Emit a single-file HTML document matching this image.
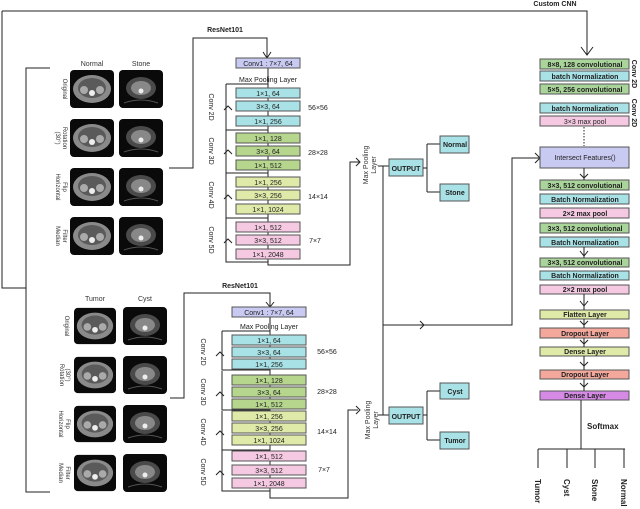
<!DOCTYPE html>
<html><head><meta charset="utf-8"><style>
html,body{margin:0;padding:0;background:#fff;}
svg{display:block;font-family:"Liberation Sans",sans-serif;}
.b{stroke:#555;stroke-width:1;}
.t{font-size:7px;fill:#222;text-anchor:middle;font-weight:bold;}
.s{font-size:7px;fill:#333;text-anchor:middle;}
.l{stroke:#222;stroke-width:1;fill:none;}
.cy{fill:#a8e2e6}.gr{fill:#b6d68e}.yg{fill:#dfeaa8}.pk{fill:#f5c9e2}.lv{fill:#c9caf2}.rd{fill:#f4a89c}.pu{fill:#d68ae6}.gd{fill:#a9d49a}
</style></head><body>
<svg width="640" height="509" viewBox="0 0 640 509">
<defs>
<symbol id="ct" viewBox="0 0 44 38"><rect width="44" height="38" rx="4" fill="#0a0a0a"/><ellipse cx="22" cy="19" rx="19" ry="14" fill="#8a8a8a"/><ellipse cx="22" cy="18" rx="14" ry="10" fill="#5a5a5a"/><ellipse cx="22" cy="23" rx="3" ry="3" fill="#eee"/><ellipse cx="14" cy="20" rx="4" ry="4" fill="#aaa"/><ellipse cx="30" cy="20" rx="4" ry="4" fill="#aaa"/></symbol>
<symbol id="ct2" viewBox="0 0 44 38"><rect width="44" height="38" rx="4" fill="#0a0a0a"/><ellipse cx="22" cy="18" rx="15" ry="11" fill="#4a4a4a"/><ellipse cx="22" cy="18" rx="10" ry="7" fill="#888"/><ellipse cx="22" cy="21" rx="2.5" ry="2.5" fill="#eee"/><path d="M5 33 Q22 27 39 33" stroke="#555" fill="none"/></symbol>
</defs>

<path class="l" d="M2 11 H587 V55"/>
<path class="l" d="M581 47 L587 55 L593 47"/>
<path class="l" d="M2 11 V288 H26"/>
<path class="l" d="M50 68 H26 V492 H50"/>
<text class="t" x="555" y="6">Custom CNN</text>

<text class="s" x="92" y="66">Normal</text><text class="s" x="141" y="66">Stone</text>
<use href="#ct" x="70" y="70" width="44" height="38"/><use href="#ct2" x="119" y="70" width="44" height="38"/>
<use href="#ct" x="70" y="119" width="44" height="38"/><use href="#ct2" x="119" y="119" width="44" height="38"/>
<use href="#ct" x="70" y="168" width="44" height="38"/><use href="#ct2" x="119" y="168" width="44" height="38"/>
<use href="#ct" x="70" y="217" width="44" height="38"/><use href="#ct2" x="119" y="217" width="44" height="38"/>
<g class="s" style="font-size:6px">
<text transform="translate(63,89) rotate(90)">Original</text>
<text transform="translate(63,138) rotate(90)">Rotation</text><text transform="translate(56,138) rotate(90)">(30°)</text>
<text transform="translate(56,187) rotate(90)">Horizontal</text><text transform="translate(63,187) rotate(90)">Flip</text>
<text transform="translate(56,236) rotate(90)">Median</text><text transform="translate(63,236) rotate(90)">Filter</text>
</g>

<text class="s" x="95" y="301">Tumor</text><text class="s" x="145" y="301">Cyst</text>
<use href="#ct" x="74" y="307" width="42" height="38"/><use href="#ct2" x="123" y="307" width="44" height="38"/>
<use href="#ct" x="74" y="356" width="42" height="38"/><use href="#ct2" x="123" y="356" width="44" height="38"/>
<use href="#ct" x="74" y="405" width="42" height="38"/><use href="#ct2" x="123" y="405" width="44" height="38"/>
<use href="#ct" x="74" y="454" width="42" height="38"/><use href="#ct2" x="123" y="454" width="44" height="38"/>
<g class="s" style="font-size:6px">
<text transform="translate(65,326) rotate(90)">Original</text>
<text transform="translate(60,375) rotate(90)">Rotation</text><text transform="translate(66,375) rotate(90)">(30°)</text>
<text transform="translate(59,424) rotate(90)">Horizontal</text><text transform="translate(66,424) rotate(90)">Flip</text>
<text transform="translate(59,473) rotate(90)">Median</text><text transform="translate(66,473) rotate(90)">Filter</text>
</g>

<text class="t" x="225" y="32">ResNet101</text>
<path class="l" d="M169 168 H193 V38 H267 V57"/><path class="l" d="M263 52 L267 58 L271 52"/>
<path class="l" d="M268 68 V258 M268 258 V265 H350 V162 H360"/>
<path class="l" d="M226 84 V130 H268 M226 128 V173 H268 M226 173 V218 H268 M226 218 V262 H268"/>
<path class="l" d="M226 84 H268"/>
<g class="b">
<rect class="lv" x="236" y="58" width="64" height="10"/>
<rect class="cy" x="236" y="88" width="64" height="10"/><rect class="cy" x="236" y="101" width="64" height="10"/><rect class="cy" x="236" y="116" width="64" height="10"/>
<rect class="gr" x="236" y="133" width="64" height="10"/><rect class="gr" x="236" y="146" width="64" height="10"/><rect class="gr" x="236" y="160" width="64" height="10"/>
<rect class="yg" x="236" y="177" width="64" height="10"/><rect class="yg" x="236" y="190" width="64" height="10"/><rect class="yg" x="236" y="204" width="64" height="10"/>
<rect class="pk" x="236" y="222" width="64" height="10"/><rect class="pk" x="236" y="235" width="64" height="10"/><rect class="pk" x="236" y="249" width="64" height="10"/>
</g>
<g class="t" style="font-weight:normal">
<text x="268" y="66">Conv1 : 7×7, 64</text>
<text x="268" y="82">Max Pooling Layer</text>
<text x="268" y="96">1×1, 64</text><text x="268" y="109">3×3, 64</text><text x="268" y="124">1×1, 256</text>
<text x="268" y="141">1×1, 128</text><text x="268" y="154">3×3, 64</text><text x="268" y="168">1×1, 512</text>
<text x="268" y="185">1×1, 256</text><text x="268" y="198">3×3, 256</text><text x="268" y="212">1×1, 1024</text>
<text x="268" y="230">1×1, 512</text><text x="268" y="243">3×3, 512</text><text x="268" y="257">1×1, 2048</text>
<text x="318" y="110">56×56</text><text x="318" y="155">28×28</text><text x="318" y="199">14×14</text><text x="315" y="243">7×7</text>
<text transform="translate(209,107) rotate(90)">Conv 2D</text>
<text transform="translate(209,151) rotate(90)">Conv 3D</text>
<text transform="translate(209,195) rotate(90)">Conv 4D</text>
<text transform="translate(209,240) rotate(90)">Conv 5D</text>
</g>
<g class="l"><path d="M224 110 L228 106 L232 110"/><path d="M224 154 L228 150 L232 154"/><path d="M224 199 L228 195 L232 199"/><path d="M224 243 L228 239 L232 243"/></g>
<g class="s" style="font-size:7px"><text transform="translate(368,165) rotate(-90)">Max Pooling</text><text transform="translate(376,165) rotate(-90)">Layer</text></g>
<path class="l" d="M356 158 L360 162 L356 166"/>
<path class="l" d="M378 166 H389 M383 166 V415"/>
<rect class="cy b" x="389" y="159" width="34" height="17"/><text class="t" x="406" y="171">OUTPUT</text>
<path class="l" d="M423 168 H427 M427 144 V192 M427 144 H440 M427 192 H440"/>
<rect class="cy b" x="440" y="136" width="29" height="17"/><text class="t" x="455" y="147">Normal</text>
<rect class="cy b" x="440" y="184" width="29" height="17"/><text class="t" x="455" y="195">Stone</text>

<text class="t" x="240" y="288">ResNet101</text>
<path class="l" d="M170 398 H184 V293 H270 V306"/><path class="l" d="M266 302 L270 307 L274 302"/>
<path class="l" d="M270 316 V487 M270 487 V498 H348 V410 H358"/>
<path class="l" d="M222 331 V370 H270 M222 371 V410 H270 M222 411 V450 H270 M222 450 V491 H270 M222 331 H270"/>
<g class="b">
<rect class="lv" x="232" y="307" width="74" height="10"/>
<rect class="cy" x="232" y="335" width="74" height="10"/><rect class="cy" x="232" y="347" width="74" height="10"/><rect class="cy" x="232" y="359" width="74" height="10"/>
<rect class="gr" x="232" y="375" width="74" height="10"/><rect class="gr" x="232" y="387" width="74" height="10"/><rect class="gr" x="232" y="399" width="74" height="10"/>
<rect class="yg" x="232" y="411" width="74" height="10"/><rect class="yg" x="232" y="423" width="74" height="10"/><rect class="yg" x="232" y="435" width="74" height="10"/>
<rect class="pk" x="232" y="451" width="74" height="10"/><rect class="pk" x="232" y="465" width="74" height="10"/><rect class="pk" x="232" y="478" width="74" height="10"/>
</g>
<g class="t" style="font-weight:normal">
<text x="269" y="315">Conv1 : 7×7, 64</text>
<text x="269" y="329">Max Pooling Layer</text>
<text x="269" y="343">1×1, 64</text><text x="269" y="355">3×3, 64</text><text x="269" y="367">1×1, 256</text>
<text x="269" y="383">1×1, 128</text><text x="269" y="395">3×3, 64</text><text x="269" y="407">1×1, 512</text>
<text x="269" y="419">1×1, 256</text><text x="269" y="431">3×3, 256</text><text x="269" y="443">1×1, 1024</text>
<text x="269" y="459">1×1, 512</text><text x="269" y="473">3×3, 512</text><text x="269" y="486">1×1, 2048</text>
<text x="327" y="354">56×56</text><text x="327" y="394">28×28</text><text x="327" y="434">14×14</text><text x="324" y="472">7×7</text>
<text transform="translate(201,352) rotate(90)">Conv 2D</text>
<text transform="translate(201,392) rotate(90)">Conv 3D</text>
<text transform="translate(201,432) rotate(90)">Conv 4D</text>
<text transform="translate(201,472) rotate(90)">Conv 5D</text>
</g>
<g class="l"><path d="M216 356 L220 352 L224 356"/><path d="M216 396 L220 392 L224 396"/><path d="M216 435 L220 431 L224 435"/><path d="M216 475 L220 471 L224 475"/></g>
<g class="s" style="font-size:7px"><text transform="translate(370,420) rotate(-90)">Max Pooling</text><text transform="translate(378,420) rotate(-90)">Layer</text></g>
<path class="l" d="M356 406 L360 410 L356 414"/>
<path class="l" d="M378 415 H389"/>
<rect class="cy b" x="389" y="407" width="34" height="17"/><text class="t" x="406" y="419">OUTPUT</text>
<path class="l" d="M423 415 H427 M427 391 V440 M427 391 H440 M427 440 H440"/>
<rect class="cy b" x="440" y="383" width="29" height="16"/><text class="t" x="455" y="394">Cyst</text>
<rect class="cy b" x="440" y="432" width="29" height="17"/><text class="t" x="455" y="443">Tumor</text>

<path class="l" d="M383 325 H512 V158 H540"/><path class="l" d="M420 321 L424 325 L420 329"/><path class="l" d="M535 153 L540 158 L535 163"/>

<g class="b">
<rect class="gd" x="540" y="59" width="89" height="10"/>
<rect class="cy" x="540" y="71" width="89" height="10"/>
<rect class="gd" x="540" y="84" width="89" height="10"/>
<rect class="cy" x="540" y="103" width="89" height="10"/>
<rect class="pk" x="540" y="116" width="89" height="10"/>
<rect class="lv" x="540" y="147" width="89" height="21"/>
<rect class="gd" x="540" y="180" width="89" height="10"/>
<rect class="cy" x="540" y="194" width="89" height="10"/>
<rect class="pk" x="540" y="208" width="89" height="10"/>
<rect class="gd" x="540" y="223" width="89" height="10"/>
<rect class="cy" x="540" y="237" width="89" height="10"/>
<rect class="gd" x="540" y="258" width="89" height="9"/>
<rect class="cy" x="540" y="271" width="89" height="9"/>
<rect class="pk" x="540" y="285" width="89" height="9"/>
<rect class="yg" x="540" y="310" width="89" height="9"/>
<rect class="rd" x="540" y="328" width="89" height="10"/>
<rect class="yg" x="540" y="347" width="89" height="9"/>
<rect class="rd" x="540" y="370" width="89" height="9"/>
<rect class="pu" x="540" y="391" width="89" height="9"/>
</g>
<path d="M584 127 V146" stroke="#222" stroke-dasharray="1.5,1.5"/>
<g class="t" style="font-size:7px">
<text x="585" y="67">8×8, 128 convolutional</text>
<text x="585" y="79">batch Normalization</text>
<text x="585" y="92">5×5, 256 convolutional</text>
<text x="585" y="111">batch Normalization</text>
<text x="585" y="124" style="font-weight:normal">3×3 max pool</text>
<text x="585" y="160" style="font-weight:normal">Intersect Features()</text>
<text x="585" y="188">3×3, 512 convolutional</text>
<text x="585" y="202">Batch Normalization</text>
<text x="585" y="216">2×2 max pool</text>
<text x="585" y="231">3×3, 512 convolutional</text>
<text x="585" y="245">Batch Normalization</text>
<text x="585" y="265">3×3, 512 convolutional</text>
<text x="585" y="278">Batch Normalization</text>
<text x="585" y="292">2×2 max pool</text>
<text x="585" y="317">Flatten Layer</text>
<text x="585" y="336">Dropout Layer</text>
<text x="585" y="354">Dense Layer</text>
<text x="585" y="377">Dropout Layer</text>
<text x="585" y="398">Dense Layer</text>
<text transform="translate(632,74) rotate(90)">Conv 2D</text>
<text transform="translate(632,113) rotate(90)">Conv 2D</text>
</g>
<g class="l">
<path d="M584 168 V180 M580 174 L584 178 L588 174"/>
<path d="M584 247 V258 M580 251 L584 256 L588 251"/>
<path d="M584 294 V310 M580 301 L584 306 L588 301"/>
<path d="M584 319 V328 M580 321 L584 325 L588 321"/>
<path d="M584 338 V347 M580 340 L584 344 L588 340"/>
<path d="M584 356 V370 M580 362 L584 366 L588 362"/>
<path d="M584 379 V391 M580 383 L584 387 L588 383"/>
<path d="M581 400 V449 M538 449 H625 M538 449 V468 M567 449 V468 M595 449 V468 M624 449 V468"/>
</g>
<text x="587" y="429" style="font-size:8px;font-weight:bold;fill:#222">Softmax</text>
<g class="t" style="font-size:8px;text-anchor:start">
<text transform="translate(535,479) rotate(90)">Tumor</text>
<text transform="translate(564,479) rotate(90)">Cyst</text>
<text transform="translate(592,479) rotate(90)">Stone</text>
<text transform="translate(621,479) rotate(90)">Normal</text>
</g>
</svg>
</body></html>
